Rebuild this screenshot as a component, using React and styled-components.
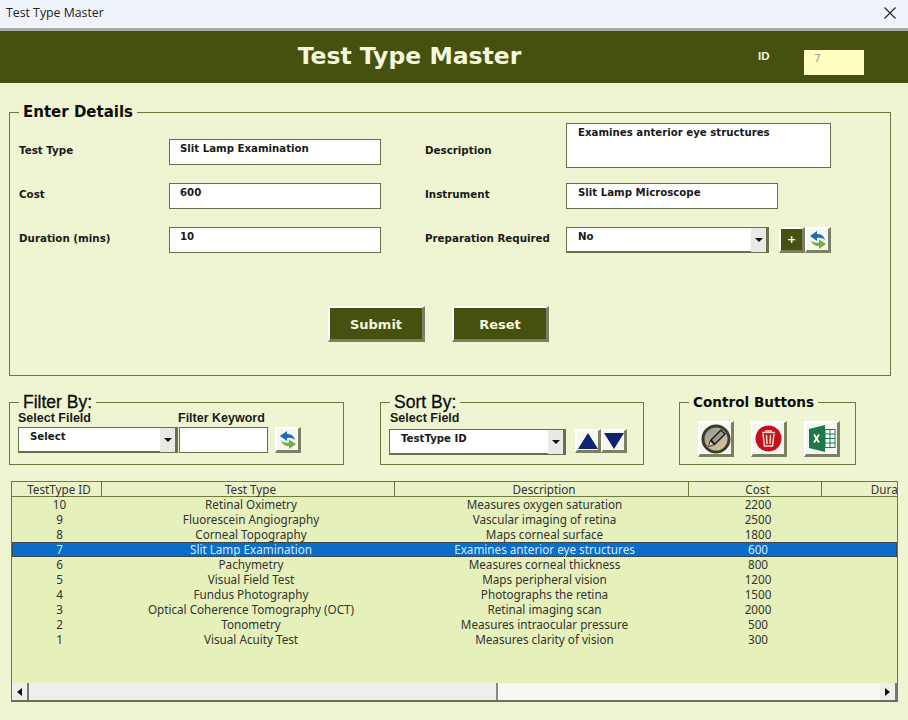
import React from 'react';
import styled, { createGlobalStyle } from 'styled-components';

const Global = createGlobalStyle`
  html, body { margin: 0; padding: 0; background: #eff5d2; }
  body { font-family: "DejaVu Sans", "Liberation Sans", sans-serif; }
`;

const Window = styled.div`
  width: 908px;
  height: 720px;
  overflow: hidden;
  display: flex;
  flex-direction: column;
  background: #eff5d2;
`;

const TitleBar = styled.div`
  height: 25px;
  flex: none;
  display: flex;
  align-items: center;
  justify-content: space-between;
  padding: 0 12px 3px 6px;
  background: #eff4fa;
  border-bottom: 3px solid #a6a9a4;
  font: 12.3px "Open Sans", "Noto Sans", sans-serif;
  color: #222;
`;

const Banner = styled.div`
  height: 52px;
  flex: none;
  display: flex;
  align-items: center;
  background: #465110;
  color: #f4f7dc;
`;

const BannerTitle = styled.div`
  width: 819px;
  margin-right: -61px;
  padding-bottom: 3px;
  text-align: center;
  font: bold 23.5px "DejaVu Sans", sans-serif;
`;

const IdLabel = styled.div`
  width: 46px;
  margin-bottom: 2px;
  font: bold 11.5px "Liberation Sans", sans-serif;
`;

const IdBox = styled.div`
  width: 50px;
  height: 25px;
  margin-top: 11px;
  padding-left: 10px;
  background: #ffffc2;
  color: #a0a08c;
  font: 11px/17px "DejaVu Sans", sans-serif;
`;

const Content = styled.div`
  padding: 19px 0 0 9px;
  display: flex;
  flex-direction: column;
`;

const Group = styled.fieldset`
  margin: 0;
  padding: 0;
  width: ${p => p.$width}px;
  box-sizing: border-box;
  border: 1px solid #6f7b3c;
  min-width: 0;
`;

const Legend = styled.legend`
  margin-left: 9px;
  padding: 0 4px;
  color: #0c0c0c;
  font: ${p => p.$font || 'bold 15px/20px "DejaVu Sans", sans-serif'};
  -webkit-text-stroke: ${p => p.$stroke || 0}px #0c0c0c;
`;

const FormGrid = styled.div`
  display: grid;
  grid-template-columns: 150px 212px 44px 141px 1fr;
  grid-template-rows: 60px 44px 26px;
  padding: 1px 0 0 9px;
`;

const Label = styled.label`
  font: bold 10.3px "DejaVu Sans", sans-serif;
  color: #1a1a1a;
  align-self: start;
  margin-top: ${p => p.$top || 0}px;
  grid-column: ${p => p.$col};
`;

const boxBorder = `
  box-sizing: border-box;
  background: #fff;
  border: 1px solid #6a7148;
`;

const TextBox = styled.div`
  ${boxBorder}
  width: ${p => p.$width || 212}px;
  height: ${p => p.$height || 26}px;
  margin-top: ${p => p.$top || 0}px;
  padding: 2px 0 0 ${p => p.$left || 11}px;
  font: bold 10.2px/14px "DejaVu Sans", sans-serif;
  color: #1a1a1a;
`;

const SelectBox = styled.div`
  ${boxBorder}
  width: ${p => p.$width}px;
  height: 26px;
  display: flex;
  justify-content: space-between;
  padding-left: 11px;
  font: bold 10.2px/18px "DejaVu Sans", sans-serif;
  color: #1a1a1a;
  border-right: none;
  border-bottom: 2px solid #6a7148;
`;

const DropArrow = styled.div`
  width: 18px;
  height: 24px;
  box-sizing: border-box;
  display: flex;
  align-items: center;
  justify-content: center;
  background: #e9e9e5;
  border-right: 3px solid #6a7148;
  &::before {
    content: "";
    border: 4px solid transparent;
    border-top: 4px solid #111;
    border-bottom: 0;
  }
`;

const Raised = styled.button`
  box-sizing: border-box;
  width: ${p => p.$w}px;
  height: ${p => p.$h}px;
  margin: 0;
  padding: 0;
  flex: none;
  display: flex;
  align-items: center;
  justify-content: center;
  background: ${p => p.$bg || '#f6f7f0'};
  border-style: solid;
  border-width: 2px 3px 3px 2px;
  border-color: #fff #7b8063 #7b8063 #fff;
`;

const PrepRow = styled.div`
  display: flex;
  grid-column: 5;
`;

const PlusBtn = styled(Raised)`
  margin-left: 10px;
  color: #fff;
  font: bold 11px "DejaVu Sans", sans-serif;
`;

const FormActions = styled.div`
  display: flex;
  gap: 27px;
  padding: 53px 0 33px 318px;
`;

const ActionBtn = styled(Raised)`
  padding-top: 1px;
  color: #f4f7dc;
  font: bold 13px "DejaVu Sans", sans-serif;
`;

const LowerRow = styled.div`
  display: flex;
  margin-top: 16px;
`;

const LowerGroup = styled(Group)`
  height: 73px;
  margin-right: ${p => p.$gap || 0}px;
`;

const SmallLabels = styled.div`
  display: flex;
  margin-top: -1px;
  padding-left: ${p => p.$left}px;
  height: 14px;
  font: bold 12.5px/14px "Liberation Sans", sans-serif;
  color: #1a1a1a;
`;

const SmallLabel = styled.span`
  width: ${p => p.$w}px;
`;

const ControlsRow = styled.div`
  display: flex;
  align-items: flex-start;
  gap: ${p => p.$gap || 0}px;
  padding: ${p => p.$pad};
`;

const Spacer = styled.div`
  width: ${p => p.$w}px;
  flex: none;
`;

const Grid = styled.div`
  margin: 16px 0 0 2px;
  width: 887px;
  height: 221px;
  box-sizing: border-box;
  display: flex;
  flex-direction: column;
  overflow: hidden;
  background: #e5f0bb;
  border: 1px solid #6f7b3c;
  border-bottom: 2px solid #6a6e5a;
  font: 11.7px "Noto Sans", "Open Sans", sans-serif;
  color: #333;
`;

const HeaderRow = styled.div`
  display: flex;
  flex: none;
  height: 14px;
  background: #eaf2c8;
  border-bottom: 1px solid #6f7b3c;
`;

const HeaderCell = styled.div`
  flex: none;
  width: ${p => p.$w}px;
  height: 14px;
  padding-left: 5px;
  line-height: 14px;
  text-align: center;
  white-space: nowrap;
  box-sizing: border-box;
  border-right: 1px solid #6f7b3c;
`;

const Body = styled.div`
  flex: 1;
  min-height: 0;
`;

const Row = styled.div`
  display: flex;
  height: 15px;
  box-sizing: border-box;
  line-height: 15px;
  ${p => p.$selected && `
    background: #0a6dc8;
    color: #d6eafc;
    outline: 1px dotted #26313a;
    outline-offset: -1px;
  `}
`;

const Cell = styled.div`
  flex: none;
  width: ${p => p.$w}px;
  padding-left: 5px;
  box-sizing: border-box;
  text-align: center;
  white-space: nowrap;
`;

const ScrollBar = styled.div`
  flex: none;
  height: 17px;
  display: flex;
  background: #f7f7f4;
`;

const ScrollEnd = styled.div`
  width: 17px;
  flex: none;
  box-sizing: border-box;
  display: flex;
  align-items: center;
  justify-content: center;
  background: #eeeeea;
  border-right: 2px solid #777;
  &::before {
    content: "";
    border: 4px solid transparent;
    ${p => p.$right
      ? 'border-left: 5px solid #111; border-right: 0;'
      : 'border-right: 5px solid #111; border-left: 0;'}
  }
`;

const ScrollThumb = styled.div`
  width: 469px;
  flex: none;
  box-sizing: border-box;
  background: #eeeeec;
  border-right: 2px solid #8a8a84;
`;

const ScrollTrack = styled.div`
  flex: 1;
`;

const Refresh = () => (
  <svg width="18" height="20" viewBox="0 0 18 20">
    <path d="M1 6 L8 1 L8 4 C12 4 15 6 16 10 C14 8 11 7.5 8 8 L8 11 Z" fill="#1a6fb0" />
    <path d="M17 14 L10 19 L10 16 C6 16 3 14 2 10.5 C4 12.5 7 13 10 12.5 L10 9.5 Z" fill="#6cb33f" />
  </svg>
);

const Triangle = ({ down }) => (
  <svg width="20" height="16" viewBox="0 0 20 16">
    <path d={down ? 'M0 0 H20 L10 16 Z' : 'M0 16 H20 L10 0 Z'} fill="#0d2470" />
  </svg>
);

const PencilIcon = () => (
  <svg width="30" height="30" viewBox="0 0 30 30">
    <defs>
      <linearGradient id="dial" x1="0" y1="0" x2="1" y2="1">
        <stop offset="0" stopColor="#8f948a" />
        <stop offset="1" stopColor="#e6c9a8" />
      </linearGradient>
    </defs>
    <circle cx="15" cy="15" r="13" fill="url(#dial)" stroke="#3a3d2e" strokeWidth="3" />
    <path d="M7 23 L9 16 L20 5 L25 10 L14 21 Z" fill="#1c1c1c" />
    <path d="M11 16 L20 7 L23 10 L14 19 Z" fill="#9a9c94" />
    <path d="M8 22 L9.5 17.5 L12.5 20.5 Z" fill="#f0c9a6" />
  </svg>
);

const TrashIcon = () => (
  <svg width="27" height="27" viewBox="0 0 27 27">
    <circle cx="13.5" cy="13.5" r="13" fill="#c5101a" />
    <path d="M7 7.5 H20 M8 9 L9.5 21 H17.5 L19 9 M11.5 10 L12 19 M15.5 10 L15 19" stroke="#f4dcd2" strokeWidth="1.5" fill="none" />
    <path d="M10 6 H17" stroke="#f4dcd2" strokeWidth="1.5" />
  </svg>
);

const ExcelIcon = () => (
  <svg width="28" height="27" viewBox="0 0 28 27">
    <path d="M1 4 L17 0 V27 L1 23 Z" fill="#1d7a48" />
    <rect x="17" y="4.5" width="10" height="18" fill="#fff" stroke="#1d7a48" />
    <path d="M17 9 H27 M17 13.5 H27 M17 18 H27 M22 4.5 V22.5" stroke="#1d7a48" />
    <path d="M6 9.5 L11 17.5 M11 9.5 L6 17.5" stroke="#fff" strokeWidth="1.8" />
  </svg>
);

const CloseIcon = () => (
  <svg width="12" height="12" viewBox="0 0 12 12">
    <path d="M0.5 0.5 L11.5 11.5 M11.5 0.5 L0.5 11.5" stroke="#222" strokeWidth="1.1" />
  </svg>
);

const columns = [90, 293, 294, 133];

const rows = [
  ['10', 'Retinal Oximetry', 'Measures oxygen saturation', '2200'],
  ['9', 'Fluorescein Angiography', 'Vascular imaging of retina', '2500'],
  ['8', 'Corneal Topography', 'Maps corneal surface', '1800'],
  ['7', 'Slit Lamp Examination', 'Examines anterior eye structures', '600'],
  ['6', 'Pachymetry', 'Measures corneal thickness', '800'],
  ['5', 'Visual Field Test', 'Maps peripheral vision', '1200'],
  ['4', 'Fundus Photography', 'Photographs the retina', '1500'],
  ['3', 'Optical Coherence Tomography (OCT)', 'Retinal imaging scan', '2000'],
  ['2', 'Tonometry', 'Measures intraocular pressure', '500'],
  ['1', 'Visual Acuity Test', 'Measures clarity of vision', '300'],
];

const headers = ['TestType ID', 'Test Type', 'Description', 'Cost', 'Duration'];

const lowerLegend = '500 17.5px/20px "Liberation Sans", sans-serif';

export default function App() {
  return (
    <Window>
      <Global />
      <TitleBar>
        Test Type Master
        <CloseIcon />
      </TitleBar>
      <Banner>
        <BannerTitle>Test Type Master</BannerTitle>
        <IdLabel>ID</IdLabel>
        <IdBox>7</IdBox>
      </Banner>
      <Content>
        <Group $width={882}>
          <Legend>Enter Details</Legend>
          <FormGrid>
            <Label $col={1} $top={21}>Test Type</Label>
            <TextBox $top={16} $left={10}>Slit Lamp Examination</TextBox>
            <Label $col={4} $top={21}>Description</Label>
            <TextBox $width={265} $height={45}>Examines anterior eye structures</TextBox>

            <Label $col={1} $top={5}>Cost</Label>
            <TextBox $left={10}>600</TextBox>
            <Label $col={4} $top={5}>Instrument</Label>
            <TextBox>Slit Lamp Microscope</TextBox>

            <Label $col={1} $top={5}>Duration (mins)</Label>
            <TextBox $left={10}>10</TextBox>
            <Label $col={4} $top={5}>Preparation Required</Label>
            <PrepRow>
              <SelectBox $width={203}>
                No
                <DropArrow />
              </SelectBox>
              <PlusBtn $w={26} $h={26} $bg="#465110">+</PlusBtn>
              <Raised $w={26} $h={26}><Refresh /></Raised>
            </PrepRow>
          </FormGrid>
          <FormActions>
            <ActionBtn $w={97} $h={36} $bg="#465110">Submit</ActionBtn>
            <ActionBtn $w={97} $h={36} $bg="#465110">Reset</ActionBtn>
          </FormActions>
        </Group>

        <LowerRow>
          <LowerGroup $width={335} $gap={36}>
            <Legend $font={lowerLegend} $stroke={0.3}>Filter By:</Legend>
            <SmallLabels $left={8}>
              <SmallLabel $w={160}>Select Fileld</SmallLabel>
              <SmallLabel $w={100}>Filter Keyword</SmallLabel>
            </SmallLabels>
            <ControlsRow $pad="2px 0 0 8px">
              <SelectBox $width={160}>
                Select
                <DropArrow />
              </SelectBox>
              <Spacer $w={1} />
              <TextBox $width={89} />
              <Spacer $w={7} />
              <Raised $w={26} $h={26}><Refresh /></Raised>
            </ControlsRow>
          </LowerGroup>

          <LowerGroup $width={264} $gap={35}>
            <Legend $font={lowerLegend} $stroke={0.3}>Sort By:</Legend>
            <SmallLabels $left={9}>
              <SmallLabel $w={160}>Select Field</SmallLabel>
            </SmallLabels>
            <ControlsRow $pad="4px 0 0 8px">
              <SelectBox $width={177}>
                TestType ID
                <DropArrow />
              </SelectBox>
              <Spacer $w={9} />
              <Raised $w={26} $h={24}><Triangle /></Raised>
              <Raised $w={26} $h={24}><Triangle down /></Raised>
            </ControlsRow>
          </LowerGroup>

          <LowerGroup $width={177}>
            <Legend $font={'bold 13.6px/20px "DejaVu Sans", sans-serif'}>Control Buttons</Legend>
            <ControlsRow $gap={17} $pad="9px 0 0 18px">
              <Raised $w={36} $h={36}><PencilIcon /></Raised>
              <Raised $w={36} $h={36}><TrashIcon /></Raised>
              <Raised $w={36} $h={36}><ExcelIcon /></Raised>
            </ControlsRow>
          </LowerGroup>
        </LowerRow>

        <Grid>
          <HeaderRow>
            {headers.map((h, i) => (
              <HeaderCell key={h} $w={columns[i] || 142}>{h}</HeaderCell>
            ))}
          </HeaderRow>
          <Body>
            {rows.map(r => (
              <Row key={r[0]} $selected={r[0] === '7'}>
                {r.map((c, i) => (
                  <Cell key={i} $w={columns[i]}>{c}</Cell>
                ))}
              </Row>
            ))}
          </Body>
          <ScrollBar>
            <ScrollEnd />
            <ScrollThumb />
            <ScrollTrack />
            <ScrollEnd $right />
          </ScrollBar>
        </Grid>
      </Content>
    </Window>
  );
}
